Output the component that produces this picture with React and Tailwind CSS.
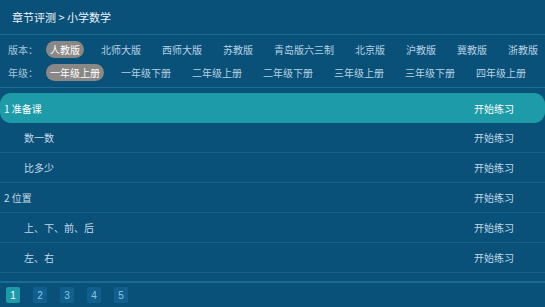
import React from "react";

const editions = ["人教版", "北师大版", "西师大版", "苏教版", "青岛版六三制", "北京版", "沪教版", "冀教版", "浙教版", "鲁教版"];
const grades = ["一年级上册", "一年级下册", "二年级上册", "二年级下册", "三年级上册", "三年级下册", "四年级上册", "四年级下册"];

const rows = [
  { name: "数一数", sub: true },
  { name: "比多少", sub: true },
  { name: "2 位置", sub: false },
  { name: "上、下、前、后", sub: true },
  { name: "左、右", sub: true },
];

function FilterRow({ label, items }) {
  return (
    <div className="flex items-center h-[17px] pl-2 whitespace-nowrap">
      <span className="w-[30px] mr-2 text-[10px] text-[#a8c6d8]">{label}</span>
      <div className="flex items-center gap-[13px]">
        {items.map((it, i) => (
          <span
            key={it}
            className={
              i === 0
                ? "h-[17px] flex items-center px-[4px] rounded-full bg-[#8a8886] text-white text-[10px]"
                : "h-[17px] flex items-center px-[4px] text-[#b6d2e2] text-[10px]"
            }
          >
            {it}
          </span>
        ))}
      </div>
    </div>
  );
}

export default function App() {
  return (
    <div
      className="w-[545px] h-[307px] overflow-hidden bg-[#0a5179] flex flex-col"
      style={{ fontFamily: '"Noto Sans CJK SC", "Noto Sans", sans-serif' }}
    >
      <div className="h-[35px] shrink-0 flex items-center pl-3 border-b border-[#1a6990] text-[11px] text-[#eef4f8]">
        章节评测 &gt; 小学数学
      </div>
      <div className="h-[53px] shrink-0 flex flex-col gap-[6px] pt-[6px] border-b border-[#1d6e94] overflow-hidden">
        <FilterRow label="版本：" items={editions} />
        <FilterRow label="年级：" items={grades} />
      </div>
      <div className="pt-[5px] shrink-0">
        <div className="h-[30px] flex items-center justify-between pl-1 pr-[31px] rounded-[11px] bg-[#1e9ba8] text-[10px] text-white">
          <span>1 准备课</span>
          <span>开始练习</span>
        </div>
        {rows.map((r) => (
          <div
            key={r.name}
            className={
              (r.sub ? "pl-6 " : "pl-1 ") +
              "h-[30px] flex items-center justify-between pr-[31px] border-b border-[#15618a] text-[10px] text-[#c3d9e6]"
            }
          >
            <span>{r.name}</span>
            <span>开始练习</span>
          </div>
        ))}
      </div>
      <div className="mt-[8px] border-t-2 border-[#196b92] flex items-center gap-[13px] pl-[6px] pt-[4px]">
        {[1, 2, 3, 4, 5].map((n) => (
          <span
            key={n}
            className={
              n === 1
                ? "w-[14px] h-[16px] flex items-center justify-center rounded-[2px] bg-[#1e9ba8] text-white text-[10px]"
                : "w-[14px] h-[16px] flex items-center justify-center rounded-[2px] bg-[#115f8e] text-[#8ec5e2] text-[10px]"
            }
            style={{ fontFamily: '"Liberation Sans", sans-serif' }}
          >
            {n}
          </span>
        ))}
      </div>
    </div>
  );
}
